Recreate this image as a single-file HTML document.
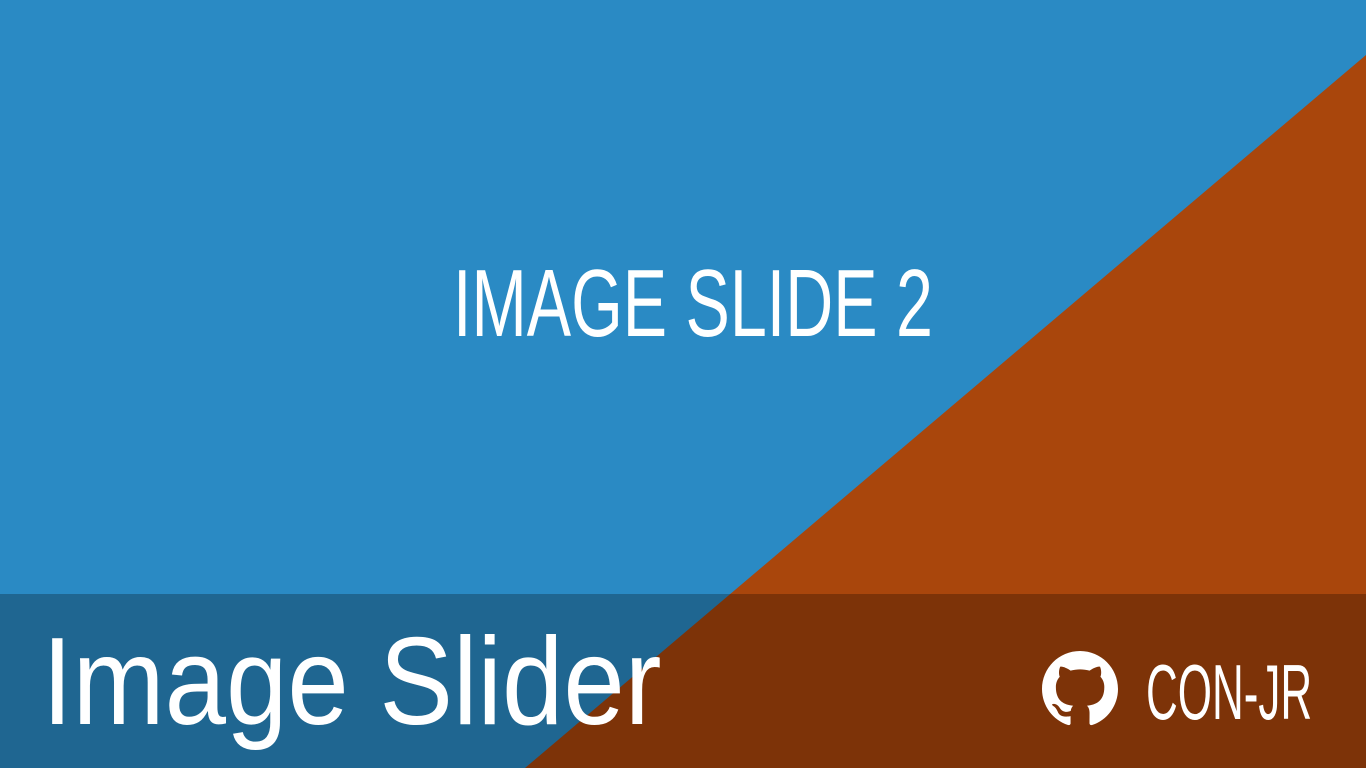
<!DOCTYPE html>
<html><head><meta charset="utf-8"><style>
html,body{margin:0;padding:0}
body{width:1366px;height:768px;position:relative;overflow:hidden;background:#2a8ac4;font-family:"Liberation Sans",sans-serif;color:#fff}
svg.bg{position:absolute;left:0;top:0}
.t1{position:absolute;left:453px;top:254px;font-size:96px;line-height:100px;white-space:nowrap;transform-origin:0 0;transform:scaleX(0.692)}
.t2{position:absolute;left:42px;top:612px;font-size:124px;line-height:140px;white-space:nowrap;transform-origin:0 0;transform:scaleX(0.89)}
.t3{position:absolute;left:1146px;top:652px;font-size:78px;line-height:80px;white-space:nowrap;transform-origin:0 0;transform:scaleX(0.564)}
</style></head><body>
<svg class="bg" width="1366" height="768">
<polygon points="1366,55 1366,768 525,768" fill="#a9460c"/>
<rect x="0" y="594" width="1366" height="174" fill="#000" fill-opacity="0.26"/>
<g transform="translate(1042,651) scale(4.75)"><path fill="#fff" d="M8 0C3.58 0 0 3.58 0 8c0 3.54 2.290 6.530 5.470 7.590.4.07.55-.17.55-.38 0-.19-.01-.82-.01-1.490-2.010.37-2.530-.49-2.690-.94-.09-.23-.48-.94-.82-1.130-.28-.15-.68-.52-.01-.53.63-.01 1.080.58 1.230.82.72 1.210 1.870.87 2.330.66.07-.52.28-.87.51-1.070-1.780-.2-3.640-.89-3.640-3.950 0-.87.31-1.590.82-2.150-.08-.2-.36-1.020.08-2.120 0 0 .67-.21 2.200.82.64-.18 1.320-.27 2-.27.68 0 1.360.09 2 .27 1.530-1.040 2.200-.82 2.200-.82.44 1.100.16 1.920.08 2.120.51.56.82 1.270.82 2.150 0 3.070-1.870 3.750-3.650 3.950.29.25.54.73.54 1.480 0 1.070-.01 1.930-.01 2.200 0 .21.15.46.55.38A8.013 8.013 0 0016 8c0-4.420-3.580-8-8-8z"/></g>
</svg>
<div class="t1">IMAGE SLIDE 2</div>
<div class="t2">Image Slider</div>
<div class="t3">CON-JR</div>
</body></html>
